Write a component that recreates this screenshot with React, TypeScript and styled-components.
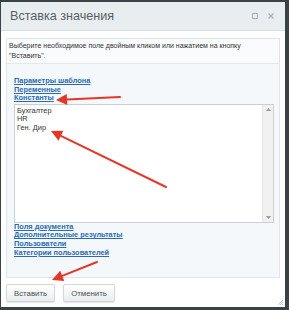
import React from "react";
import styled, { createGlobalStyle } from "styled-components";

const GlobalStyle = createGlobalStyle`
  html, body {
    margin: 0;
    padding: 0;
    background: #3b4246;
  }
  body {
    width: 289px;
    height: 310px;
    overflow: hidden;
    font-family: "Liberation Sans", Arial, sans-serif;
  }
`;

const Dialog = styled.div`
  position: relative;
  width: 284px;
  height: 305px;
  margin: 2px 4px 3px 1px;
  background: #ffffff;
  display: flex;
  flex-direction: column;
`;

const Header = styled.div`
  height: 28px;
  flex: none;
  display: flex;
  align-items: center;
  padding: 0 11px 0 9px;
  background: #e8eef0;
  border-bottom: 1px solid #d6dee1;
`;

const Title = styled.div`
  flex: 1;
  font-size: 12.6px;
  color: #5a5f63;
`;

const HeaderIcons = styled.div`
  display: flex;
  align-items: center;
  gap: 10px;
  color: #a7afb3;
`;

const Body = styled.div`
  flex: 1;
  display: flex;
  flex-direction: column;
  padding: 7px 5px 0 5px;
`;

const Panel = styled.div`
  height: 238px;
  border: 1px solid #dfe6ea;
  background: #f4f8fa;
  display: flex;
  flex-direction: column;
`;

const Hint = styled.div`
  padding: 2px 2px 2px 2px;
  height: 20px;
  font-size: 7px;
  line-height: 10px;
  color: #333;
  background: #f9fbfc;
  border-bottom: 1px solid #e2e8eb;
`;

const Lists = styled.div`
  padding: 13px 5px 0 7px;
  display: flex;
  flex-direction: column;
`;

const GroupLink = styled.a`
  display: block;
  font-size: 7.4px;
  line-height: 8.6px;
  font-weight: bold;
  color: #2a6ab4;
  text-decoration: underline;
  cursor: pointer;
`;

const ListBox = styled.div`
  margin: 1px 0 0;
  height: 117px;
  border: 1px solid #c9cfd3;
  background: #fff;
  display: flex;
`;

const Items = styled.div`
  flex: 1;
  padding: 2px 2px;
  font-size: 7.4px;
  line-height: 8.6px;
  color: #333;
`;

const Scrollbar = styled.div`
  width: 10px;
  background: #f1f1f1;
  border-left: 1px solid #e6e6e6;
  display: flex;
  flex-direction: column;
  justify-content: space-between;
  align-items: center;
  padding: 3px 0;
`;

const Buttons = styled.div`
  display: flex;
  gap: 8px;
  padding-top: 6px;
`;

const Button = styled.button<{ $w: number }>`
  width: ${(p) => p.$w}px;
  height: 18px;
  padding: 0;
  border: 1px solid #d3d8db;
  border-radius: 2px;
  background: linear-gradient(#ffffff, #e9edef);
  box-shadow: 0 1px 1px rgba(0, 0, 0, 0.12);
  font-family: "Liberation Sans", Arial, sans-serif;
  font-size: 7.8px;
  color: #4a4f52;
  cursor: pointer;
`;

const Grip = styled.svg`
  position: absolute;
  right: 1px;
  bottom: 1px;
`;

const Overlay = styled.svg`
  position: fixed;
  left: 0;
  top: 0;
  pointer-events: none;
`;

function Arrow({ x1, y1, x2, y2 }: { x1: number; y1: number; x2: number; y2: number }) {
  const a = Math.atan2(y2 - y1, x2 - x1);
  const len = 11;
  const wid = 5.5;
  const bx = x2 - Math.cos(a) * len;
  const by = y2 - Math.sin(a) * len;
  const px = -Math.sin(a) * wid;
  const py = Math.cos(a) * wid;
  return (
    <g>
      <line x1={x1} y1={y1} x2={bx} y2={by} stroke="#e2382b" strokeWidth={2} strokeLinecap="round" />
      <polygon points={`${x2},${y2} ${bx + px},${by + py} ${bx - px},${by - py}`} fill="#e2382b" />
    </g>
  );
}

export default function App() {
  return (
    <>
      <GlobalStyle />
      <Dialog>
        <Header>
          <Title>Вставка значения</Title>
          <HeaderIcons>
            <svg width="6" height="6" viewBox="0 0 6 6">
              <rect x="0.5" y="0.5" width="5" height="5" fill="none" stroke="currentColor" strokeWidth="1" />
            </svg>
            <svg width="6" height="6" viewBox="0 0 6 6">
              <path d="M0.5 0.5 L5.5 5.5 M5.5 0.5 L0.5 5.5" stroke="currentColor" strokeWidth="1.1" />
            </svg>
          </HeaderIcons>
        </Header>
        <Body>
          <Panel>
            <Hint>
              Выберите необходимое поле двойным кликом или нажатием на кнопку
              <br />
              "Вставить".
            </Hint>
            <Lists>
              <GroupLink>Параметры шаблона</GroupLink>
              <GroupLink>Переменные</GroupLink>
              <GroupLink>Константы</GroupLink>
              <ListBox>
                <Items>
                  <div>Бухгалтер</div>
                  <div>HR</div>
                  <div>Ген. Дир</div>
                </Items>
                <Scrollbar>
                  <svg width="5" height="3" viewBox="0 0 5 3">
                    <path d="M0 3 L2.5 0 L5 3 Z" fill="#9a9a9a" />
                  </svg>
                  <svg width="5" height="3" viewBox="0 0 5 3">
                    <path d="M0 0 L2.5 3 L5 0 Z" fill="#9a9a9a" />
                  </svg>
                </Scrollbar>
              </ListBox>
              <GroupLink>Поля документа</GroupLink>
              <GroupLink>Дополнительные результаты</GroupLink>
              <GroupLink>Пользователи</GroupLink>
              <GroupLink>Категории пользователей</GroupLink>
            </Lists>
          </Panel>
          <Buttons>
            <Button $w={49}>Вставить</Button>
            <Button $w={52}>Отменить</Button>
          </Buttons>
        </Body>
        <Grip width="7" height="7" viewBox="0 0 7 7">
          <path d="M6 1 L1 6 M6 3 L3 6 M6 5 L5 6" stroke="#b8bec2" strokeWidth="0.8" />
        </Grip>
      </Dialog>
      <Overlay width="289" height="310" viewBox="0 0 289 310">
        <Arrow x1={120} y1={97} x2={56} y2={100} />
        <Arrow x1={166} y1={187} x2={51} y2={131} />
        <Arrow x1={97} y1={262} x2={52} y2={280} />
      </Overlay>
    </>
  );
}
